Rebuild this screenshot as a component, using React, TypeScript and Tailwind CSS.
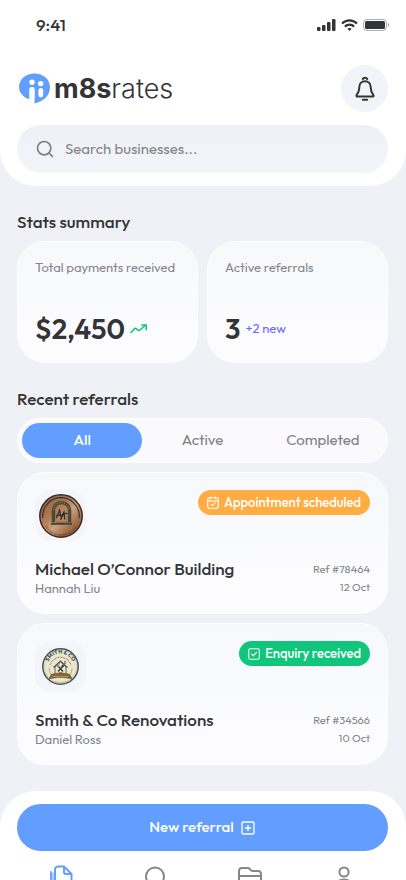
import React, { useState } from 'react';
import { Search, SquarePlus } from 'lucide-react';

interface Referral {
  id: string;
  business: string;
  contact: string;
  date: string;
  status: 'scheduled' | 'received';
  logo: React.ReactNode;
}

const SignalIcon = () => (
  <svg viewBox="0 0 19 12" className="w-[19px] h-3" fill="currentColor">
    <rect x="0" y="8" width="3.500" height="4" rx="1" />
    <rect x="5" y="6" width="3.500" height="6" rx="1" />
    <rect x="10" y="3" width="3.500" height="9" rx="1" />
    <rect x="15" y="0" width="3.500" height="12" rx="1" />
  </svg>
);

const WifiIcon = () => (
  <svg viewBox="0 0 17 12" className="w-[17px] h-3" fill="none" stroke="currentColor" strokeWidth="2.200">
    <path d="M1 4.600C5.200.2 11.800.2 16 4.600" />
    <path d="M3.900 7.600c2.600-2.600 6.600-2.600 9.200 0" />
    <path d="M8.500 12 6.300 9.700c1.300-1.100 3.100-1.100 4.400 0z" fill="currentColor" stroke="none" />
  </svg>
);

const BatteryIcon = () => (
  <svg viewBox="0 0 27 12" className="w-[27px] h-3">
    <rect x=".5" y=".5" width="23" height="11" rx="3.500" fill="none" stroke="currentColor" strokeOpacity=".4" />
    <rect x="2" y="2" width="20" height="8" rx="1.500" fill="currentColor" />
    <path d="M25 4v4c1.700-.7 1.700-3.300 0-4z" fill="currentColor" fillOpacity=".45" />
  </svg>
);

const BrandMark = () => (
  <svg viewBox="0 0 31 31" className="w-[31px] h-[31px]">
    <path d="M15.500.5C7 .5 0 6.300 0 14c0 5.500 4.200 10.500 10.500 12.300V16.200c0-3 5-3 5 0V30.500C24.500 28.500 31 22.500 31 14 31 6.300 24 .5 15.500.5z" fill="#619eff" />
    <circle cx="13" cy="9.300" r="2.700" fill="#fff" />
    <circle cx="21.700" cy="10.600" r="2.700" fill="#fff" />
    <rect x="10.500" y="14" width="5" height="13" rx="2.500" fill="#fff" />
    <rect x="19.400" y="15" width="4.800" height="9.500" rx="2.400" fill="#fff" />
  </svg>
);

const BellIcon = () => (
  <svg viewBox="0 0 24 26" className="w-6 h-[26px]" fill="none" stroke="currentColor" strokeWidth="2" strokeLinecap="round" strokeLinejoin="round">
    <path d="M9.800 3c.7-1.700 3.700-1.700 4.400 0" />
    <path d="M12 5.300c-3.600 0-5.700 2.500-5.700 5.900 0 4-1.100 5.900-2.700 8-.5.700-.2 1.300.6 1.300h15.600c.8 0 1.100-.6.6-1.300-1.600-2.100-2.700-4-2.700-8 0-3.400-2.100-5.900-5.700-5.900z" />
    <path d="M9.800 23.800h4.400" />
  </svg>
);

const TrendIcon = () => (
  <svg viewBox="0 0 18 10" className="w-[18px] h-[10px]" fill="none" stroke="#12c47b" strokeWidth="1.500" strokeLinecap="round" strokeLinejoin="round">
    <path d="M1 8.500l3.200-3.600c.8-.8 1.800-.7 2.400 0l.8.900c.8.9 2 .9 2.800 0L15.500 1.300" />
    <path d="M11.800 1h4.400v4.700" />
  </svg>
);

const CalendarCheckIcon = () => (
  <svg viewBox="0 0 12 13" className="w-3 h-[13px]" fill="none" stroke="currentColor" strokeWidth="1.100" strokeLinecap="round" strokeLinejoin="round">
    <rect x=".7" y="1.800" width="10.600" height="10.500" rx="2" />
    <path d="M.7 5h10.600M3.300.7v2M8.700.7v2M4.200 8.500l1.300 1.200L8 7.200" />
  </svg>
);

const CheckBoxIcon = () => (
  <svg viewBox="0 0 12 12" className="w-3 h-3" fill="none" stroke="currentColor" strokeWidth="1.100" strokeLinecap="round" strokeLinejoin="round">
    <rect x=".7" y=".7" width="10.600" height="10.600" rx="1.800" />
    <path d="M3.600 6.200l1.700 1.700 3.200-3.600" />
  </svg>
);

const BronzeLogo = () => (
  <svg viewBox="0 0 44 44" className="w-11 h-11">
    <defs>
      <linearGradient id="bronze" x1="0" y1="0" x2="1" y2="1">
        <stop offset="0" stopColor="#85583a" />
        <stop offset=".35" stopColor="#ad7852" />
        <stop offset=".55" stopColor="#d0a17e" />
        <stop offset=".75" stopColor="#a16d48" />
        <stop offset="1" stopColor="#7a4d30" />
      </linearGradient>
      <path id="bronze-arc" d="M4 24a18 18 0 0 0 36 0" />
    </defs>
    <circle cx="22" cy="22" r="21.200" fill="url(#bronze)" stroke="#3a2a26" strokeWidth="1.500" />
    <path d="M3.700 24V22a18.300 18.300 0 0 1 36.600 0v2" fill="none" stroke="#30323a" strokeWidth="1.200" />
    <path d="M14.500 28V16.500a8 8 0 0 1 16 0V28" fill="none" stroke="#4d4938" strokeWidth="3.600" />
    <path d="M17.500 28V17a5 5 0 0 1 10 0v11z" fill="#bd8257" stroke="#8d7b50" strokeWidth=".6" />
    <path d="M12 29.700h21" stroke="#4d4938" strokeWidth="2.400" />
    <path d="M17.500 24l3-8 1.500 7 3-5 .8 7.500M17 22c5-2 7 0 4.500 4M22 25c1-5 6-7 6.500-5" fill="none" stroke="#273039" strokeWidth="1.200" />
    <path d="M15 16a7.500 7.500 0 0 1 15 0" fill="none" stroke="#c49162" strokeWidth="1" strokeDasharray="1 1.400" />
    <text fontSize="2.700" fill="#4b3024" textAnchor="middle"><textPath href="#bronze-arc" startOffset="50%">MICHAEL O’CONNOR BUILDING</textPath></text>
  </svg>
);

const SmithLogo = () => (
  <svg viewBox="0 0 37 37" className="w-[37px] h-[37px]">
    <defs>
      <path id="smith-arc" d="M5.500 18.500a13 13 0 0 1 26 0" />
    </defs>
    <circle cx="18.500" cy="18.500" r="17.700" fill="#eee6c9" stroke="#405567" strokeWidth="1.500" />
    <circle cx="18.500" cy="18.500" r="16.300" fill="none" stroke="#c4bb94" strokeWidth=".5" />
    <path d="M8 17a11 11 0 0 1 21 0" fill="none" stroke="#7c8986" strokeWidth="1.100" strokeDasharray="1 .6" />
    <path d="M7 20a11.600 11.600 0 0 0 1.500 6M30 20a11.600 11.600 0 0 1-1.500 6" fill="none" stroke="#7c8986" strokeWidth=".6" />
    <path d="M13 27v-8l5.500-5 5.500 5v8" fill="#eee6c9" stroke="#4d5a5c" strokeWidth=".9" />
    <path d="M11.500 19.500l7-6.500 7 6.500M23 13v3" fill="none" stroke="#4d5a5c" strokeWidth="1.100" />
    <path d="M16 18l5 5.500M21 18l-5 5.500" stroke="#33414b" strokeWidth="1.500" />
    <circle cx="16.200" cy="18" r="1.200" fill="#b88b40" />
    <circle cx="20.800" cy="18" r="1.200" fill="#33414b" />
    <path d="M17 27v-3h3v3z" fill="#b88b40" />
    <path d="M9 26.500c6-2 13-2 19 0l2 4.500c-7-2-16-2-23 0z" fill="#83693a" stroke="#55472e" strokeWidth=".5" />
    <path d="M11 33c5 2 10 2 15 0" fill="none" stroke="#d6ba78" strokeWidth="1" />
    <text fontSize="5.500" fontWeight="700" fill="#34495b" textAnchor="middle"><textPath href="#smith-arc" startOffset="50%">SMITH &amp; CO</textPath></text>
    <text x="18.500" y="28.500" fontSize="2.300" fill="#e6d6a4" textAnchor="middle">RENOVATIONS</text>
  </svg>
);

const NavIcon: React.FC<{ children: React.ReactNode }> = ({ children }) => (
  <svg viewBox="0 0 24 24" className="w-6 h-6" fill="none" stroke="currentColor" strokeWidth="2" strokeLinecap="round" strokeLinejoin="round">{children}</svg>
);

const navItems = [
  { label: 'Referrals', icon: <><path d="M15 1.500H9a3 3 0 0 0-3 3V17a3 3 0 0 0 3 3h10.500a3 3 0 0 0 3-3V9zM15 1.500V7a2 2 0 0 0 2 2h5.500" /><path d="M2 7v13" strokeWidth="1.800" /><path d="M4 8v12" strokeWidth="1" /></> },
  { label: 'Search', icon: <><circle cx="12" cy="11.500" r="9" /><path d="M18.500 18L22 21.500" /></> },
  { label: 'Files', icon: <path d="M1 19V6a3 3 0 0 1 3-3h5.500c1 0 1.700.3 2.300 1l1 1.100c.6.600 1.300.9 2.300.9H20a3 3 0 0 1 3 3v10a2 2 0 0 1-2 2H3a2 2 0 0 1-2-2zM1 11h22" /> },
  { label: 'Profile', icon: <><circle cx="12" cy="7" r="4.600" /><path d="M4 23c0-5.500 2.500-8.500 8-8.500s8 3 8 8.500" /></> },
];

const referrals: Referral[] = [
  { id: '78464', business: 'Michael O’Connor Building', contact: 'Hannah Liu', date: '12 Oct', status: 'scheduled', logo: <BronzeLogo /> },
  { id: '34566', business: 'Smith & Co Renovations', contact: 'Daniel Ross', date: '10 Oct', status: 'received', logo: <SmithLogo /> },
];

const tabs = ['All', 'Active', 'Completed'];

const StatusBadge: React.FC<{ status: Referral['status'] }> = ({ status }) =>
  status === 'scheduled' ? (
    <span className="h-[25px] px-[9px] flex items-center gap-[5px] rounded-full bg-[#ffad42] text-white text-[13px] font-medium whitespace-nowrap"><CalendarCheckIcon /> Appointment scheduled</span>
  ) : (
    <span className="h-[25px] px-[9px] flex items-center gap-[5px] rounded-full bg-[#10c67a] text-white text-[13px] font-medium whitespace-nowrap"><CheckBoxIcon /> Enquiry received</span>
  );

const ReferralCard: React.FC<{ referral: Referral }> = ({ referral }) => (
  <article className="mt-[9px] px-[17px] pt-[17px] pb-[18px] rounded-[28px] border border-white bg-linear-to-b from-[#f7f8fb] to-[#fdfdff]">
    <div className="flex justify-between items-start">
      <div className="w-[51px] h-[51px] rounded-2xl bg-[#f4f5f9] flex items-center justify-center">{referral.logo}</div>
      <StatusBadge status={referral.status} />
    </div>
    <div className="mt-4 flex justify-between">
      <div>
        <h3 className="text-[17px] leading-6 font-medium">{referral.business}</h3>
        <p className="text-[13px] leading-[14px] text-[#85868a]">{referral.contact}</p>
      </div>
      <div className="text-right text-[11px] text-[#85868a]">
        <p className="leading-6">Ref #{referral.id}</p>
        <p className="leading-3">{referral.date}</p>
      </div>
    </div>
  </article>
);

export default function App() {
  const [activeTab, setActiveTab] = useState('All');
  const [query, setQuery] = useState('');

  return (
    <div className="h-screen flex flex-col bg-[#f0f1f6] text-[#333436] font-['Outfit','Lato',sans-serif] overflow-hidden">
      <header className="shrink-0 pt-[11px] pb-[13px] rounded-b-[36px] bg-white">
        <div className="h-7 pl-9 pr-4 flex items-center justify-between">
          <span className="text-[17px] font-medium">9:41</span>
          <div className="flex items-center gap-[5px]"><SignalIcon /><WifiIcon /><BatteryIcon /></div>
        </div>
        <div className="mt-[26px] pl-[19px] pr-[18px] flex items-center justify-between">
          <a href="#home" className="flex items-center gap-1">
            <BrandMark />
            <span className="font-['Inter',sans-serif] text-[27px] leading-8 font-light"><b className="font-bold">m8s</b>rates</span>
          </a>
          <button aria-label="Notifications" className="w-[47px] h-[47px] rounded-full bg-[#f3f4f9] flex items-center justify-center"><BellIcon /></button>
        </div>
        <label className="mt-[13px] ml-[17px] mr-[18px] h-12 px-[18px] flex items-center gap-[10px] rounded-full bg-linear-to-b from-[#eff0f5] to-[#f4f5fa]">
          <Search className="w-5 h-5 shrink-0 text-[#7f8084]" />
          <input type="text" aria-label="Search businesses" placeholder="Search businesses..." value={query} onChange={(e) => setQuery(e.target.value)} className="flex-1 min-w-0 bg-transparent outline-none text-[15px] placeholder:text-[#85868a]" />
        </label>
      </header>

      <main className="flex-1 min-h-0 overflow-y-auto pl-[17px] pr-[18px] pt-6">
        <h2 className="text-[17px] leading-6 font-medium">Stats summary</h2>
        <section className="mt-[7px] grid grid-cols-2 gap-[9px]">
          <div className="h-[122px] p-[17px] flex flex-col justify-between rounded-[28px] border border-white bg-linear-to-b from-[#f7f8fa] to-[#fdfdff]">
            <p className="text-[13px] leading-4 text-[#85868a] whitespace-nowrap">Total payments received</p>
            <div className="flex items-center gap-[5px]"><span className="text-[28px] leading-8 font-semibold">$2,450</span><TrendIcon /></div>
          </div>
          <div className="h-[122px] p-[17px] flex flex-col justify-between rounded-[28px] border border-white bg-linear-to-b from-[#f7f8fa] to-[#fdfdff]">
            <p className="text-[13px] leading-4 text-[#85868a]">Active referrals</p>
            <div className="flex items-center gap-[5px]"><span className="text-[28px] leading-8 font-semibold">3</span><span className="text-[13px] text-[#6b68ff]">+2 new</span></div>
          </div>
        </section>

        <h2 className="mt-6 text-[17px] leading-6 font-medium">Recent referrals</h2>
        <div role="tablist" className="mt-[7px] h-[45px] p-1 grid grid-cols-3 rounded-full border border-white bg-[#fafafc]">
          {tabs.map((tab) => (
            <button key={tab} role="tab" aria-selected={activeTab === tab} onClick={() => setActiveTab(tab)} className={`rounded-full text-[15px] ${activeTab === tab ? 'bg-[#619eff] text-white font-medium' : 'text-[#7f8084]'}`}>{tab}</button>
          ))}
        </div>
        {referrals.map((referral) => <ReferralCard key={referral.id} referral={referral} />)}
      </main>

      <footer className="shrink-0 pl-[17px] pr-[18px] pt-[13px] rounded-t-[36px] bg-white">
        <button className="w-full h-[47px] flex items-center justify-center gap-[6px] rounded-full bg-[#619eff] text-white text-[15px] font-medium">New referral <SquarePlus className="w-4 h-4" /></button>
        <nav className="h-[29px] pt-[14px] px-8 flex justify-between overflow-hidden text-[#85868a]">
          {navItems.map((item, i) => (
            <a key={item.label} href={`#${item.label.toLowerCase()}`} aria-label={item.label} className={i === 0 ? 'text-[#619eff]' : ''}><NavIcon>{item.icon}</NavIcon></a>
          ))}
        </nav>
      </footer>
    </div>
  );
}
